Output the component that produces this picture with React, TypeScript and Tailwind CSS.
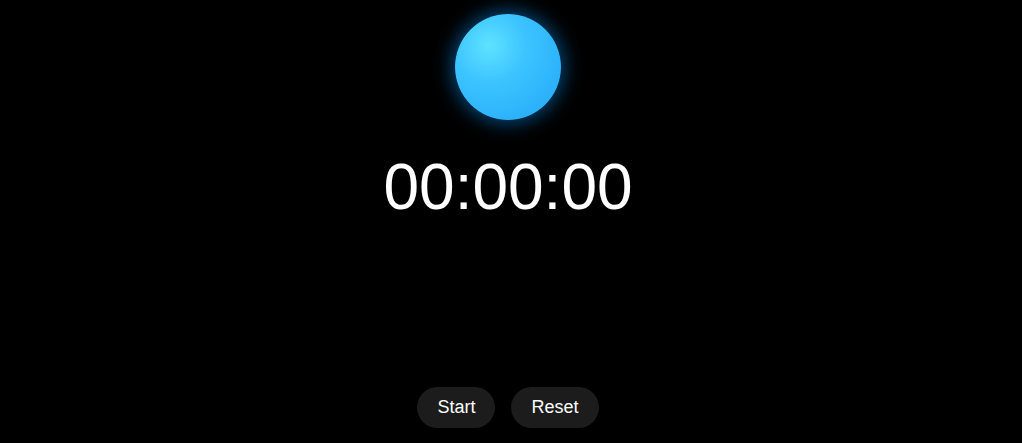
import React, { useEffect, useRef, useState } from 'react';

const pad = (n: number) => String(n).padStart(2, '0');

const formatTime = (ms: number) => {
  const totalSec = Math.floor(ms / 1000);
  const h = Math.floor(totalSec / 3600);
  const m = Math.floor((totalSec % 3600) / 60);
  const s = totalSec % 60;
  return `${pad(h)}:${pad(m)}:${pad(s)}`;
};

export default function App() {
  const [elapsed, setElapsed] = useState(0);
  const [running, setRunning] = useState(false);
  const startRef = useRef(0);

  useEffect(() => {
    if (!running) return;
    startRef.current = Date.now() - elapsed;
    const id = setInterval(() => setElapsed(Date.now() - startRef.current), 250);
    return () => clearInterval(id);
    // eslint-disable-next-line react-hooks/exhaustive-deps
  }, [running]);

  const handleReset = () => {
    setRunning(false);
    setElapsed(0);
  };

  return (
    <div className="h-screen w-full bg-black text-white font-['Liberation_Sans',Arial,sans-serif] flex flex-col items-center pr-1.5 overflow-hidden">
      {/* Orb */}
      <div className="mt-[14px] w-[106px] h-[106px] rounded-full bg-[radial-gradient(circle_at_32%_30%,#5fe2ff_0%,#3cc4ff_35%,#22a6f7_100%)] shadow-[0_0_18px_4px_rgba(0,150,255,0.45)]" />

      {/* Timer */}
      <div className="mt-[19px] text-[64px] tabular-nums">{formatTime(elapsed)}</div>

      {/* Controls */}
      <div className="mt-auto mb-[15px] flex items-center gap-4">
        <button
          onClick={() => setRunning((r) => !r)}
          className="h-[41px] px-5 rounded-full bg-[#1c1c1c] text-[18px] text-white hover:bg-[#262626]"
        >
          {running ? 'Stop' : 'Start'}
        </button>
        <button
          onClick={handleReset}
          className="h-[41px] px-5 rounded-full bg-[#1c1c1c] text-[18px] text-white hover:bg-[#262626]"
        >
          Reset
        </button>
      </div>
    </div>
  );
}
